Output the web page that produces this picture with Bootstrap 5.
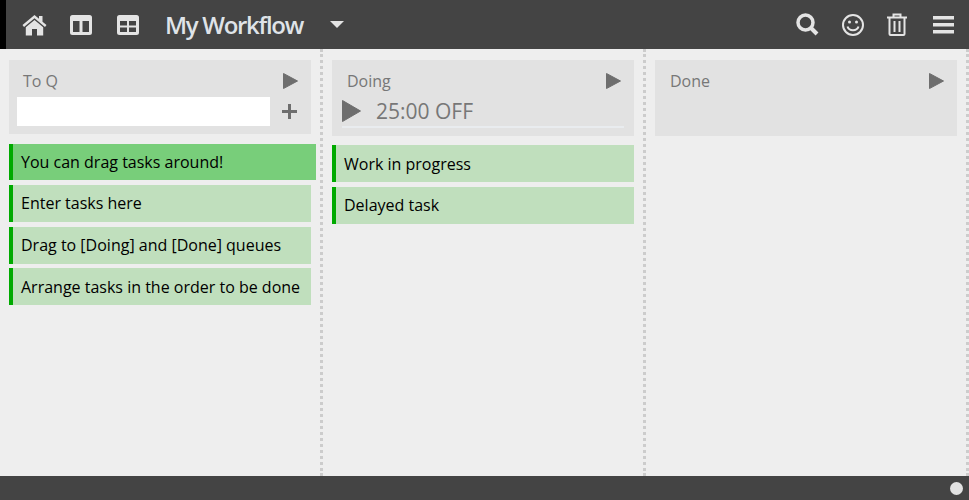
<!DOCTYPE html>
<html lang="en">
<head>
    <meta charset="UTF-8">
    <title>My Workflow</title>
    <link rel="stylesheet" href="https://cdn.jsdelivr.net/npm/bootstrap@5.3.0/dist/css/bootstrap.min.css">
    <style>
        html, body { height: 100%; }
        body {
            font-family: "Open Sans", "Liberation Sans", sans-serif;
            font-size: 16px;
            background: #eeeeee;
            color: #000;
            overflow: hidden;
        }
        .app { width: 969px; height: 500px; }
        .topbar {
            height: 49px;
            background: #444444;
            border-left: 6px solid #000;
            color: #e4e4e4;
        }
        .topicon { display: block; flex: none; }
        .wf-title { font-size: 24px; font-weight: 600; letter-spacing: -1.3px; line-height: 49px; color: #dfe3e8; }
        .board { height: 427px; }
        .queue {
            width: 323px;
            height: 427px;
            padding: 11px 9px 0 9px;
            border-right: 3px dotted #cccccc;
        }
        .qhead { background: #e2e2e2; height: 76px; color: #777; position: relative; }
        .qhead.short { height: 74px; }
        .qtitle { padding: 9px 0 0 14px; line-height: 24px; }
        .qtitle.shifted { padding-left: 15px; }
        .qplay { position: absolute; right: 13px; top: 13px; }
        .addrow { padding: 4px 14px 0 8px; }
        .addinput { width: 253px; height: 29px; background: #fff; border: 0; padding: 0 4px; }
        .timer { padding: 3px 10px 0 10px; }
        .timertext { font-size: 21px; line-height: 30px; color: #777; }
        .timerbar { height: 2px; background: #e9ecef; margin-top: 0; }
        .task {
            height: 37px;
            line-height: 37px;
            background: #c0dfbd;
            border-left: 4px solid #00aa00;
            padding-left: 8px;
            color: #000;
            white-space: nowrap;
        }
        .task.low { line-height: 39px; }
        .task.active { background: #78ce7a; width: 307px; height: 36px; line-height: 37px; margin-bottom: 5px; }
        .task-a { margin-bottom: 5px; }
        .task-b { margin-bottom: 4px; }
        .foot { height: 24px; background: #444444; padding-right: 6px; }
        .dot { width: 13px; height: 13px; border-radius: 50%; background: #e2e2e2; }
    </style>
</head>
<body>
    <div class="app d-flex flex-column">
        <div class="topbar d-flex align-items-center">
            <!-- home -->
            <svg class="topicon" style="margin-left:16px" width="25" height="22" viewBox="0 0 25 22" fill="#e4e4e4">
                <path d="M12.5 1 L0.5 11 L2 13 L12.5 4.2 L23 13 L24.500 11 L20.500 7.700 V2 H17 V4.800 Z"/>
                <path d="M12.500 6 L3.800 13.200 V21.500 H10 V15 H15 V21.500 H21.200 V13.200 Z"/>
            </svg>
            <!-- two columns -->
            <svg class="topicon" style="margin-left:23px" width="22" height="20" viewBox="0 0 22 20" fill="#e4e4e4" fill-rule="evenodd">
                <path d="M2.500 0 H19.500 A2.500 2.500 0 0 1 22 2.500 V17.500 A2.500 2.500 0 0 1 19.500 20 H2.500 A2.500 2.500 0 0 1 0 17.500 V2.500 A2.500 2.500 0 0 1 2.500 0 Z M3 6 V17 H9.500 V6 Z M12.500 6 V17 H19 V6 Z"/>
            </svg>
            <!-- four panes -->
            <svg class="topicon" style="margin-left:25px" width="22" height="20" viewBox="0 0 22 20" fill="#e4e4e4" fill-rule="evenodd">
                <path d="M2.500 0 H19.500 A2.500 2.500 0 0 1 22 2.500 V17.500 A2.500 2.500 0 0 1 19.500 20 H2.500 A2.500 2.500 0 0 1 0 17.500 V2.500 A2.500 2.500 0 0 1 2.500 0 Z M3 6 V10.500 H10 V6 Z M12 6 V10.500 H19 V6 Z M3 12.500 V17 H10 V12.500 Z M12 12.500 V17 H19 V12.500 Z"/>
            </svg>
            <span class="wf-title" style="margin-left:26px">My Workflow</span>
            <svg class="topicon" style="margin-left:27px" width="14" height="7" viewBox="0 0 14 7" fill="#e4e4e4"><path d="M0 0 H14 L7 7 Z"/></svg>

            <div class="ms-auto d-flex align-items-center">
                <!-- search -->
                <svg class="topicon" width="23" height="23" viewBox="0 0 23 23" fill="none" stroke="#e4e4e4">
                    <circle cx="9.500" cy="9.500" r="7.500" stroke-width="3.500"/>
                    <path d="M15 15 L21 21" stroke-width="4"/>
                </svg>
                <!-- smiley -->
                <svg class="topicon" style="margin-left:23px" width="22" height="22" viewBox="0 0 22 22" fill="none" stroke="#e4e4e4" stroke-width="2">
                    <circle cx="11" cy="11" r="10"/>
                    <path d="M5.500 12.500 C7 17.500 15 17.500 16.500 12.500"/>
                    <circle cx="7.500" cy="8" r="1.500" fill="#e4e4e4" stroke="none"/>
                    <circle cx="14.500" cy="8" r="1.500" fill="#e4e4e4" stroke="none"/>
                </svg>
                <!-- trash -->
                <svg class="topicon" style="margin-left:23px" width="20" height="23" viewBox="0 0 20 23" fill="none" stroke="#e4e4e4" stroke-width="2">
                    <path d="M0 4.500 H20 M6.500 4 V1.500 H13.500 V4"/>
                    <path d="M2.500 5 V21 A1 1 0 0 0 3.500 22 H16.500 A1 1 0 0 0 17.500 21 V5"/>
                    <path d="M7.500 8 V19 M12.500 8 V19"/>
                </svg>
                <!-- menu -->
                <svg class="topicon" style="margin-left:26px;margin-right:15px" width="21" height="18" viewBox="0 0 21 18" fill="#e4e4e4">
                    <rect y="0" width="21" height="3.500"/>
                    <rect y="7" width="21" height="3.500"/>
                    <rect y="14" width="21" height="3.500"/>
                </svg>
            </div>
        </div>

        <div class="board d-flex">
            <div class="queue">
                <div class="qhead short">
                    <div class="qtitle">To Q</div>
                    <svg class="qplay" width="15" height="16" viewBox="0 0 15 16" fill="#6e6e6e" stroke="#6e6e6e" stroke-linejoin="round"><path d="M0.500 0.500 L14.500 8 L0.500 15.500 Z"/></svg>
                    <div class="addrow d-flex align-items-center justify-content-between">
                        <input class="addinput" type="text">
                        <svg width="15" height="15" viewBox="0 0 15 15" fill="#6e6e6e"><path d="M6 0 H9 V6 H15 V9 H9 V15 H6 V9 H0 V6 H6 Z"/></svg>
                    </div>
                </div>
                <div style="height:10px"></div>
                <div class="task active">You can drag tasks around!</div>
                <div class="task task-a">Enter tasks here</div>
                <div class="task task-b">Drag to [Doing] and [Done] queues</div>
                <div class="task low">Arrange tasks in the order to be done</div>
            </div>

            <div class="queue">
                <div class="qhead">
                    <div class="qtitle shifted">Doing</div>
                    <svg class="qplay" width="15" height="16" viewBox="0 0 15 16" fill="#6e6e6e" stroke="#6e6e6e" stroke-linejoin="round"><path d="M0.500 0.500 L14.500 8 L0.500 15.500 Z"/></svg>
                    <div class="timer">
                        <div class="d-flex align-items-center">
                            <svg width="19" height="22" viewBox="0 0 19 22" fill="#6e6e6e" stroke="#6e6e6e" stroke-linejoin="round"><path d="M0.500 0.500 L18.500 11 L0.500 21.500 Z"/></svg>
                            <span class="timertext" style="margin-left:15px">25:00 OFF</span>
                        </div>
                        <div class="timerbar"></div>
                    </div>
                </div>
                <div style="height:9px"></div>
                <div class="task task-a low">Work in progress</div>
                <div class="task">Delayed task</div>
            </div>

            <div class="queue">
                <div class="qhead">
                    <div class="qtitle shifted">Done</div>
                    <svg class="qplay" width="15" height="16" viewBox="0 0 15 16" fill="#6e6e6e" stroke="#6e6e6e" stroke-linejoin="round"><path d="M0.500 0.500 L14.500 8 L0.500 15.500 Z"/></svg>
                </div>
            </div>
        </div>

        <div class="foot d-flex align-items-center justify-content-end">
            <div class="dot"></div>
        </div>
    </div>
    <script src="https://cdn.jsdelivr.net/npm/bootstrap@5.3.0/dist/js/bootstrap.bundle.min.js"></script>
</body>
</html>
